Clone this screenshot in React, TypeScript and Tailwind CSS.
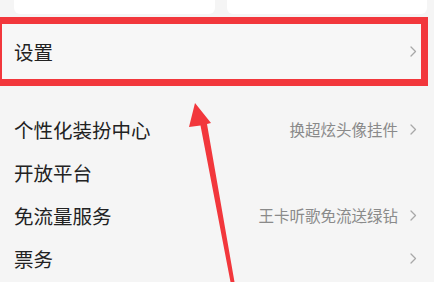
import React from "react";

const font = { fontFamily: '"Noto Sans CJK SC", "Noto Sans", sans-serif' };

function Chevron() {
  return (
    <svg width="7" height="11" viewBox="0 0 7 11" className="shrink-0">
      <polyline
        points="1,1 5.5,5.5 1,10"
        fill="none"
        stroke="#a8a8a8"
        strokeWidth="1.3"
        strokeLinecap="round"
        strokeLinejoin="round"
      />
    </svg>
  );
}

const rows = [
  { label: "个性化装扮中心", hint: "换超炫头像挂件", arrow: true },
  { label: "开放平台", hint: "", arrow: false },
  { label: "免流量服务", hint: "王卡听歌免流送绿钻", arrow: true },
  { label: "票务", hint: "", arrow: true },
];

export default function App() {
  return (
    <div
      className="relative h-[282px] w-[434px] overflow-hidden bg-[#f5f5f5]"
      style={font}
    >
      <div className="flex h-[14px] gap-[12px] pl-[14px] pr-[7px]">
        <div className="flex-1 rounded-b-md bg-white" />
        <div className="flex-1 rounded-b-md bg-white" />
      </div>

      <div className="ml-[-5px] mt-[3px] flex h-[69px] w-[433px] items-center justify-between border-[7px] border-[#f2373c] bg-[#f7f7f7] pl-[12px] pr-[4px]">
        <span className="text-[19.5px] text-[#222]">设置</span>
        <Chevron />
      </div>

      <div className="mt-[22px] flex flex-col">
        {rows.map((r) => (
          <div
            key={r.label}
            className="flex h-[43px] items-center justify-between pl-[14px] pr-[17px]"
          >
            <span className="text-[19.5px] text-[#222]">{r.label}</span>
            <div className="flex items-center gap-[12px]">
              {r.hint && (
                <span className="text-[15.5px] text-[#8a8a8a]">{r.hint}</span>
              )}
              {r.arrow && <Chevron />}
            </div>
          </div>
        ))}
      </div>

      <svg
        className="pointer-events-none absolute left-0 top-0"
        width="434"
        height="282"
        viewBox="0 0 434 282"
      >
        <polygon
          points="195,103 211,123 207,124 234.5,282 230.5,282 200.5,125.5 189,127"
          fill="#f2373c"
        />
      </svg>
    </div>
  );
}
